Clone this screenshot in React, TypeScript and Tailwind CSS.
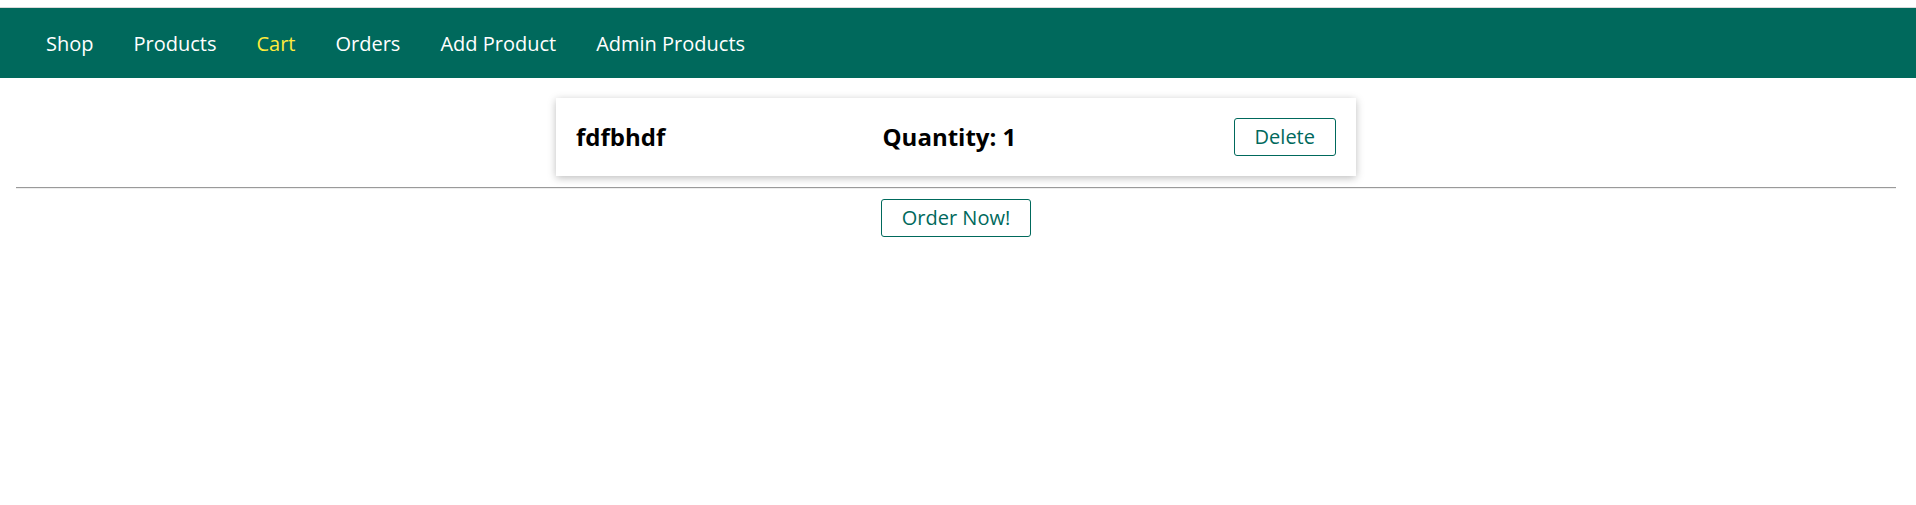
import { FC } from "react";

type NavItem = {
  label: string;
  active?: boolean;
};

const navItems: NavItem[] = [
  { label: "Shop" },
  { label: "Products" },
  { label: "Cart", active: true },
  { label: "Orders" },
  { label: "Add Product" },
  { label: "Admin Products" },
];

type CartItem = {
  id: string;
  title: string;
  quantity: number;
};

const cartItems: CartItem[] = [{ id: "1", title: "fdfbhdf", quantity: 1 }];

const Header: FC = () => (
  <header className="mt-[7px] border-t border-[#d9d9d9] bg-[#00695c] h-[71px] flex items-center pl-[46px] pt-[2px]">
    <nav>
      <ul className="flex items-center gap-10">
        {navItems.map((item) => (
          <li key={item.label}>
            <a
              href="#"
              className={
                item.active
                  ? "text-[20px] leading-[28px] text-[#ffeb3b]"
                  : "text-[20px] leading-[28px] text-white"
              }
            >
              {item.label}
            </a>
          </li>
        ))}
      </ul>
    </nav>
  </header>
);

export default function App() {
  return (
    <div className="min-h-[505px] bg-white font-['Open_Sans',sans-serif]">
      <Header />
      <main className="pt-5 pr-1">
        <ul className="flex flex-col items-center">
          {cartItems.map((item) => (
            <li
              key={item.id}
              className="w-[800px] flex items-center justify-between p-5 bg-white shadow-[0_2px_8px_rgba(0,0,0,0.26)]"
            >
              <h2 className="text-[24px] leading-[32px] font-bold text-black">
                {item.title}
              </h2>
              <h2 className="text-[24px] leading-[32px] font-bold text-black">
                Quantity: {item.quantity}
              </h2>
              <form>
                <button
                  type="button"
                  className="border border-[#00695c] rounded-[3px] bg-white text-[#00695c] text-[20px] leading-[28px] px-5 py-1"
                >
                  Delete
                </button>
              </form>
            </li>
          ))}
        </ul>
        <hr className="mt-[11px] ml-4 mr-4 h-0 border-t border-b border-t-[#9a9a9a] border-b-[#eeeeee]" />
        <div className="flex justify-center mt-[10px]">
          <button
            type="button"
            className="border border-[#00695c] rounded-[3px] bg-white text-[#00695c] text-[20px] leading-[28px] px-5 py-1"
          >
            Order Now!
          </button>
        </div>
      </main>
    </div>
  );
}
